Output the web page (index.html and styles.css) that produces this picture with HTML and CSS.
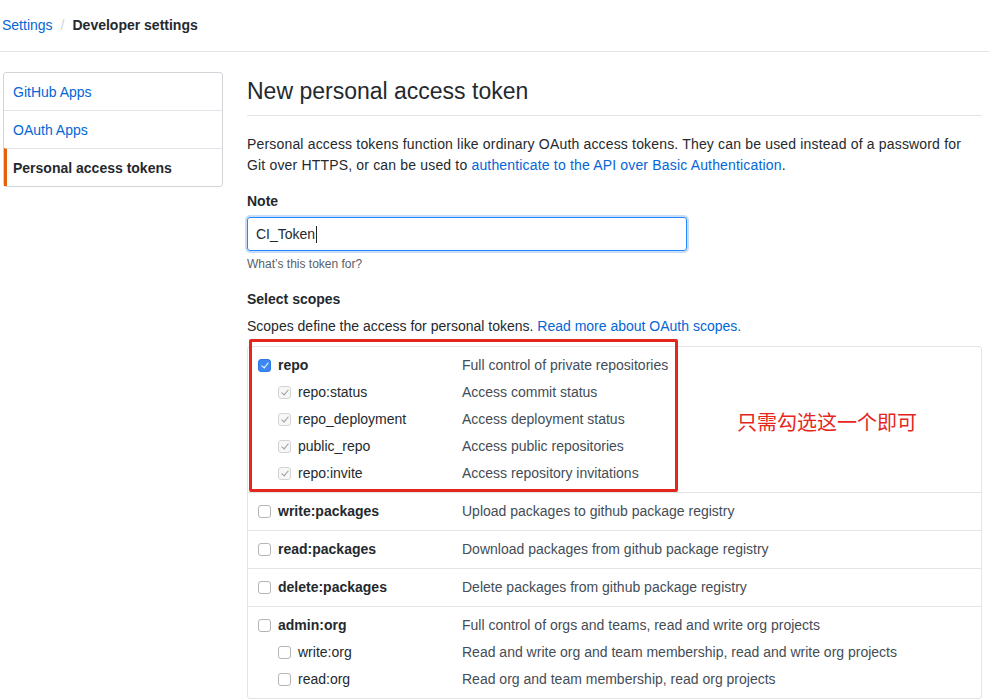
FILE: index.html
```html
<!DOCTYPE html>
<html lang="en">
<head>
<meta charset="utf-8">
<title>New personal access token</title>
<link rel="stylesheet" href="styles.css">
</head>
<body>
<header class="crumbs">
  <a class="crumb-link" href="#">Settings</a>
  <span class="crumb-sep">/</span>
  <strong class="crumb-current">Developer settings</strong>
</header>
<div class="layout">
  <nav class="menu">
    <a class="menu-item" href="#">GitHub Apps</a>
    <a class="menu-item" href="#">OAuth Apps</a>
    <a class="menu-item selected" href="#">Personal access tokens</a>
  </nav>
  <main class="main">
    <h1 class="subhead">New personal access token</h1>
    <p class="lead">Personal access tokens function like ordinary OAuth access tokens. They can be used instead of a password for Git over HTTPS, or can be used to <a href="#">authenticate to the API over Basic Authentication</a>.</p>
    <div class="field">
      <label class="label">Note</label>
      <div class="input"><span class="input-text">CI_Token</span><span class="caret"></span></div>
      <p class="note">What’s this token for?</p>
    </div>
    <h3 class="label">Select scopes</h3>
    <p class="scopes-intro">Scopes define the access for personal tokens. <a href="#">Read more about OAuth scopes.</a></p>
    <div class="scopes">
      <div class="group">
        <div class="row top"><span class="cb checked"></span><span class="name">repo</span><span class="desc">Full control of private repositories</span></div>
        <div class="row sub"><span class="cb implied"></span><span class="name">repo:status</span><span class="desc">Access commit status</span></div>
        <div class="row sub"><span class="cb implied"></span><span class="name">repo_deployment</span><span class="desc">Access deployment status</span></div>
        <div class="row sub"><span class="cb implied"></span><span class="name">public_repo</span><span class="desc">Access public repositories</span></div>
        <div class="row sub"><span class="cb implied"></span><span class="name">repo:invite</span><span class="desc">Access repository invitations</span></div>
      </div>
      <div class="group">
        <div class="row top"><span class="cb"></span><span class="name">write:packages</span><span class="desc">Upload packages to github package registry</span></div>
      </div>
      <div class="group">
        <div class="row top"><span class="cb"></span><span class="name">read:packages</span><span class="desc">Download packages from github package registry</span></div>
      </div>
      <div class="group">
        <div class="row top"><span class="cb"></span><span class="name">delete:packages</span><span class="desc">Delete packages from github package registry</span></div>
      </div>
      <div class="group">
        <div class="row top"><span class="cb"></span><span class="name">admin:org</span><span class="desc">Full control of orgs and teams, read and write org projects</span></div>
        <div class="row sub"><span class="cb"></span><span class="name">write:org</span><span class="desc">Read and write org and team membership, read and write org projects</span></div>
        <div class="row sub"><span class="cb"></span><span class="name">read:org</span><span class="desc">Read org and team membership, read org projects</span></div>
      </div>
      <div class="mark"></div>
      <div class="mark-note">只需勾选这一个即可</div>
    </div>
  </main>
</div>
</body>
</html>
```
FILE: styles.css
```css
* { box-sizing: border-box; }
html, body { margin: 0; padding: 0; background: #fff; }
body {
  font-family: "Liberation Sans", Arial, "Noto Sans CJK SC", sans-serif;
  font-size: 14px;
  line-height: 21px;
  color: #24292e;
  overflow: hidden;
}
a { color: #0366d6; text-decoration: none; }
p, h1, h3 { margin: 0; }

.crumbs {
  height: 52px;
  border-bottom: 1px solid #e1e4e8;
  padding: 15px 0 0 2px;
  font-size: 14px;
  line-height: 21px;
  display: flex;
  align-items: baseline;
}
.crumb-link { color: #0366d6; }
.crumb-sep { color: #d1d5da; margin: 0 8px; }
.crumb-current { font-weight: 700; color: #24292e; }

.layout {
  display: flex;
  align-items: flex-start;
  padding: 20px 0 0 3px;
}
.menu {
  flex: none;
  width: 220px;
  border: 1px solid #d1d5da;
  border-radius: 3px;
  display: flex;
  flex-direction: column;
}
.menu-item {
  display: block;
  height: 38px;
  padding: 9px 9px 0;
  line-height: 20px;
  border-top: 1px solid #e1e4e8;
  color: #0366d6;
}
.menu-item:first-child { border-top: 0; height: 37px; }
.menu-item.selected {
  color: #24292e;
  font-weight: 700;
  border-left: 3px solid #e36209;
  padding-left: 6px;
}

.main {
  flex: none;
  width: 735px;
  margin-left: 24px;
}
.subhead {
  font-size: 23px;
  font-weight: 400;
  line-height: 30px;
  padding-top: 4px;
  padding-bottom: 9px;
  border-bottom: 1px solid #e1e4e8;
}
.lead { margin-top: 18px; width: 722px; letter-spacing: 0.17px; }
.field { margin-top: 15px; }
.label { display: block; font-size: 14px; font-weight: 700; line-height: 21px; }
.input {
  margin-top: 5px;
  width: 440px;
  height: 34px;
  border: 1px solid #2188ff;
  border-radius: 3px;
  box-shadow: 0 0 0 2px #c9dcf8;
  padding: 0 8px;
  display: flex;
  align-items: center;
  font-size: 14px;
}
.caret { display: inline-block; width: 1px; height: 17px; background: #24292e; margin-left: 1px; }
.note { margin-top: 4px; font-size: 12px; line-height: 18px; color: #586069; }
h3.label { margin-top: 16px; }
.scopes-intro { margin-top: 6px; }

.scopes {
  position: relative;
  margin-top: 9px;
  border: 1px solid #e1e4e8;
  border-radius: 3px;
}
.group {
  padding: 8px 10px;
  border-top: 1px solid #e1e4e8;
  display: flex;
  flex-direction: column;
  gap: 6px;
}
.group:first-child { border-top: 0; }
.row {
  display: grid;
  grid-template-columns: 20px 184px 1fr;
  align-items: center;
  height: 21px;
  white-space: nowrap;
}
.row.sub { grid-template-columns: 20px 20px 164px 1fr; }
.row.sub .cb { grid-column: 2; }
.row .name { font-weight: 700; }
.row.sub .name { font-weight: 400; }
.desc { color: #444d56; }

.cb {
  width: 13px;
  height: 13px;
  border: 1px solid #b5b5b5;
  border-radius: 3px;
  background: #fff;
  position: relative;
}
.cb.checked { background: #3d87f5; border-color: #2f78e6; }
.cb.implied { background: #f7f7f7; border-color: #d4d4d4; }
.cb.checked::after, .cb.implied::after {
  content: "";
  position: absolute;
  left: 3.5px;
  top: 1px;
  width: 3px;
  height: 6px;
  border: solid #fff;
  border-width: 0 1.6px 1.6px 0;
  transform: rotate(40deg);
}
.cb.implied::after { border-color: #9a9a9a; }

.mark {
  position: absolute;
  left: 1px;
  top: -8px;
  width: 429px;
  height: 153px;
  border: 3px solid #e5261d;
  border-radius: 2px;
}
.mark-note {
  position: absolute;
  left: 489px;
  top: 61px;
  font-family: "Noto Sans CJK SC", sans-serif;
  font-size: 20px;
  line-height: 28px;
  color: #e5261d;
}
```
